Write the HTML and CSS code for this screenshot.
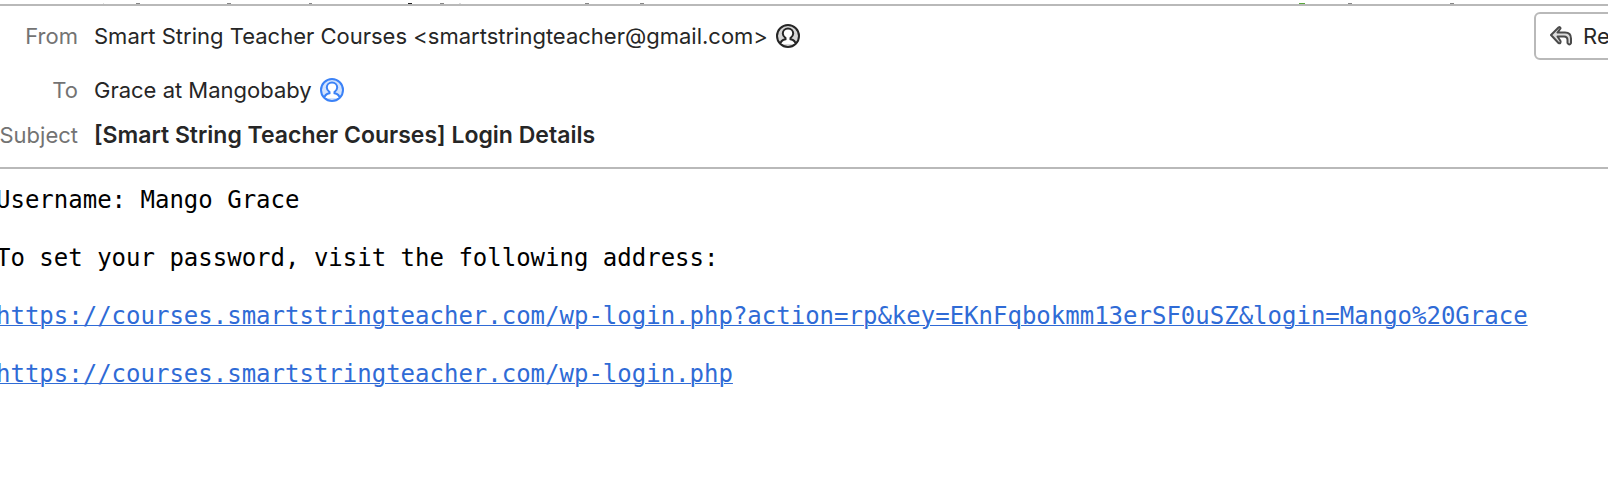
FILE: index.html
```html
<!DOCTYPE html>
<html lang="en">
<head>
    <meta charset="UTF-8">
    <meta name="viewport" content="width=device-width, initial-scale=1.0">
    <title>Login Details</title>
    <link rel="stylesheet" href="styles.css">
</head>
<body>
    <!-- Bottom edge of the message list -->
    <svg class="list-edge" height="4" aria-hidden="true">
        <path fill="#ddd" d="M103 3h1v1h-1zM459 3h2v1h-2z"/>
        <path fill="#888" d="M136 3h4v1h-4zM227 3h4v1h-4zM309 3h3v1h-3zM440 3h4v1h-4zM585 3h4v1h-4zM640 3h4v1h-4zM1348 3h4v1h-4zM1450 3h4v1h-4z"/>
        <path fill="#222" d="M408 3h4v1h-4z"/>
        <path fill="#5aa83c" d="M1299 3h6v1h-6z"/>
    </svg>

    <!-- Message header -->
    <header class="message-header">
        <dl class="fields">
            <dt>From</dt>
            <dd class="from">
                Smart String Teacher Courses &lt;smartstringteacher@gmail.com&gt;
                <svg class="contact-icon" viewBox="0 0 24 24" aria-hidden="true">
                    <circle class="ring" cx="12" cy="12" r="11"/>
                    <path class="person" d="M4.500 20c0-3 1.500-4 5-4.800v-1.200C7.500 12.500 6.800 11 6.800 9.500a5.200 5 0 0 1 10.400 0c0 1.500-.7 3-2.700 4.500v1.200c3.500.8 5 1.800 5 4.800"/>
                </svg>
            </dd>
            <dt>To</dt>
            <dd class="to">
                Grace at Mangobaby
                <svg class="contact-icon known" viewBox="0 0 24 24" aria-hidden="true">
                    <circle class="ring" cx="12" cy="12" r="11"/>
                    <path class="person" d="M4.500 20c0-3 1.500-4 5-4.800v-1.200C7.500 12.500 6.800 11 6.800 9.500a5.200 5 0 0 1 10.400 0c0 1.500-.7 3-2.700 4.500v1.200c3.500.8 5 1.800 5 4.800"/>
                </svg>
            </dd>
            <dt>Subject</dt>
            <dd class="subject">[Smart String Teacher Courses] Login Details</dd>
        </dl>
        <button class="reply-button" type="button">
            <svg class="reply-icon" viewBox="0 0 22 20" aria-hidden="true">
                <path d="M1 9 8.500 1.500q1.500-1 2 .5v.5L7.500 6.500H15q6 0 6 6V17q-1.500 3-3.500 0v-3q0-3.500-3.500-3.500H7.500L10.500 15q.5 3-2 2z"/>
            </svg>
            Reply
        </button>
    </header>

    <!-- Message body -->
    <main class="message-body">
        <p>Username: Mango Grace</p>
        <p>To set your password, visit the following address:</p>
        <p><a href="https://courses.smartstringteacher.com/wp-login.php?action=rp&amp;key=EKnFqbokmm13erSF0uSZ&amp;login=Mango%20Grace">https://courses.smartstringteacher.com/wp-login.php?action=rp&amp;key=EKnFqbokmm13erSF0uSZ&amp;login=Mango%20Grace</a></p>
        <p><a href="https://courses.smartstringteacher.com/wp-login.php">https://courses.smartstringteacher.com/wp-login.php</a></p>
    </main>
</body>
</html>
```

FILE: styles.css
```css
body {
    font-family: Inter, "Liberation Sans", sans-serif;
    font-size: 22px;
    margin: 0;
    background-color: #fff;
    color: #262626;
    overflow: hidden;
}

.list-edge {
    display: block;
    width: 100%;
}

/* Message header */
.message-header {
    display: flex;
    justify-content: space-between;
    align-items: flex-start;
    border-top: 2px solid #b9b9b9;
    border-bottom: 2px solid #b9b9b9;
    padding: 6px 0 16px;
}

.fields {
    display: grid;
    grid-template-columns: 78px auto;
    column-gap: 16px;
    line-height: 32px;
    margin: 8px 0 0;
    white-space: nowrap;
}

.fields dt {
    color: #737373;
    justify-self: end;
}

.fields dd {
    display: flex;
    align-items: center;
    gap: 8px;
    margin: 0;
}

.fields .from {
    margin-bottom: 22px;
}

.fields .to {
    margin-bottom: 13px;
}

.fields .subject {
    font-size: 23px;
    font-weight: 600;
}

.contact-icon {
    width: 24px;
    height: 24px;
    fill: none;
    stroke: #262626;
    stroke-width: 2;
}

.contact-icon .ring {
    fill: #d6d6d6;
}

.contact-icon .person {
    fill: #fff;
}

.contact-icon.known {
    stroke: #3b82f7;
}

.contact-icon.known .ring {
    fill: #d3e3fd;
}

/* Runs past the right edge of the window */
.reply-button {
    display: flex;
    flex-shrink: 0;
    align-items: center;
    gap: 11px;
    height: 48px;
    margin-right: -49px;
    padding: 0 14px;
    border: 2px solid #b9b9b9;
    border-radius: 6px;
    background: #fff;
    color: #262626;
    font: inherit;
}

.reply-icon {
    width: 22px;
    height: 20px;
    fill: #dcdcdc;
    stroke: #4a4a4a;
    stroke-width: 2;
    stroke-linejoin: round;
}

/* Message body */
.message-body {
    margin-left: -4px;
    padding-top: 17px;
    font-family: "DejaVu Sans Mono", monospace;
    font-size: 24px;
    line-height: 29px;
    color: #000;
    white-space: nowrap;
}

.message-body p {
    margin: 0 0 29px;
}

.message-body a {
    color: #2f6bd6;
    text-decoration-thickness: 1px;
}
```
